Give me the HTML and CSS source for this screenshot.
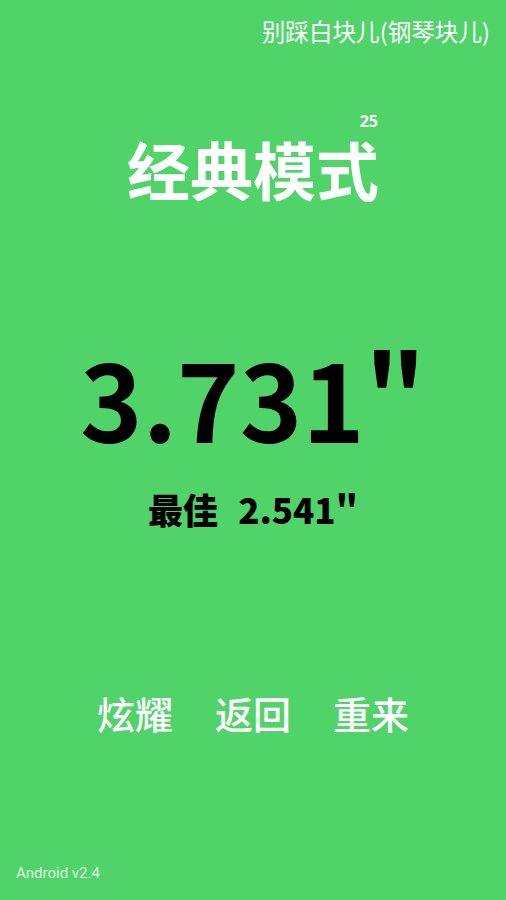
FILE: index.html
```html
<!DOCTYPE html>
<html lang="zh-CN">
<head>
<meta charset="utf-8">
<link rel="stylesheet" href="styles.css">
</head>
<body>
<div class="screen">
  <div class="app-name">别踩白块儿(钢琴块儿)</div>
  <div class="mode-wrap">
    <div class="mode-box">
      <div class="badge">25</div>
      <div class="mode">经典模式</div>
    </div>
  </div>
  <div class="score">3.731"</div>
  <div class="best">最佳<span class="best-val">2.541"</span></div>
  <div class="actions">
    <span class="btn">炫耀</span>
    <span class="btn">返回</span>
    <span class="btn">重来</span>
  </div>
  <div class="version">Android v2.4</div>
</div>
</body>
</html>
```
FILE: styles.css
```css
html, body {
  margin: 0;
  padding: 0;
}
body {
  background: #50d46a;
  font-family: "Noto Sans CJK SC", "Noto Sans", sans-serif;
}
.screen {
  width: 506px;
  height: 900px;
  display: flex;
  flex-direction: column;
  overflow: hidden;
}
.app-name {
  padding-top: 18px;
  padding-right: 16px;
  text-align: right;
  color: #ffffff;
  font-size: 23.6px;
  line-height: 26px;
}
.mode-wrap {
  margin-top: 69px;
  display: flex;
  justify-content: center;
}
.mode-box {
  display: flex;
  flex-direction: column;
  align-items: flex-end;
  color: #ffffff;
}
.badge {
  font-family: "Open Sans", "Noto Sans", sans-serif;
  font-size: 16px;
  line-height: 16px;
  font-weight: 700;
  margin-right: 1px;
}
.mode {
  margin-top: 7px;
  font-size: 63px;
  font-weight: 700;
  line-height: 63px;
}
.score {
  margin-top: 145px;
  text-align: center;
  color: #000000;
  font-size: 106px;
  font-weight: 700;
  line-height: 106px;
}
.best {
  margin-top: 41px;
  text-align: center;
  color: #000000;
  font-size: 35px;
  font-weight: 900;
  line-height: 35px;
}
.best-val {
  margin-left: 20px;
}
.actions {
  margin-top: 168px;
  display: flex;
  justify-content: center;
  gap: 42px;
  color: #ffffff;
  font-size: 38px;
  line-height: 38px;
  font-weight: 500;
}
.version {
  margin-top: 133px;
  padding-left: 16px;
  color: rgba(255, 255, 255, 0.85);
  font-family: Roboto, "Noto Sans", sans-serif;
  font-size: 15px;
  line-height: 17px;
}
```
